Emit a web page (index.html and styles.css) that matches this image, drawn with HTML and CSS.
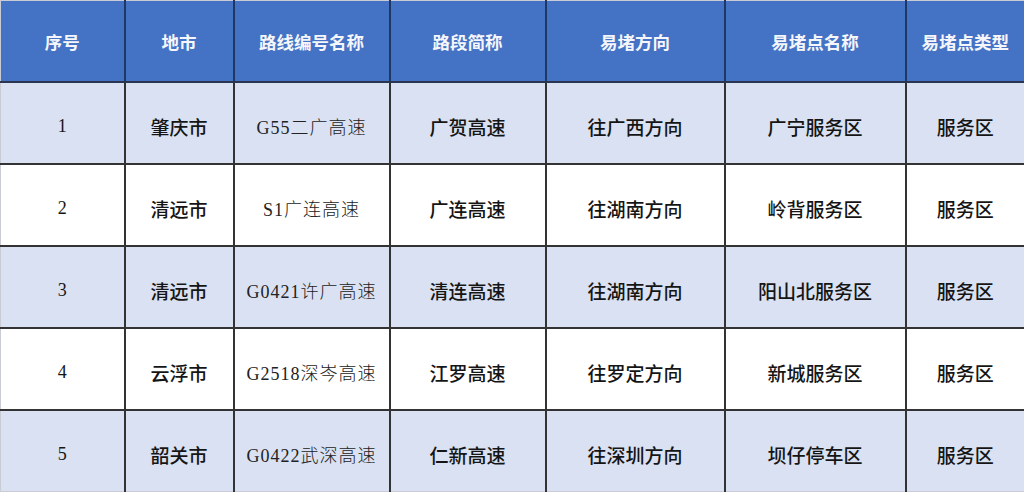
FILE: index.html
```html
<!DOCTYPE html>
<html lang="zh-CN">
<head>
<meta charset="utf-8">
<title>易堵点</title>
<link rel="stylesheet" href="styles.css">
</head>
<body>
<table class="grid">
  <colgroup>
    <col class="c1"><col class="c2"><col class="c3"><col class="c4"><col class="c5"><col class="c6"><col class="c7">
  </colgroup>
  <thead>
    <tr>
      <th>序号</th><th>地市</th><th>路线编号名称</th><th>路段简称</th><th>易堵方向</th><th>易堵点名称</th><th>易堵点类型</th>
    </tr>
  </thead>
  <tbody>
    <tr class="alt">
      <td class="num">1</td><td>肇庆市</td><td class="route">G55二广高速</td><td>广贺高速</td><td>往广西方向</td><td>广宁服务区</td><td>服务区</td>
    </tr>
    <tr>
      <td class="num">2</td><td>清远市</td><td class="route">S1广连高速</td><td>广连高速</td><td>往湖南方向</td><td>岭背服务区</td><td>服务区</td>
    </tr>
    <tr class="alt">
      <td class="num">3</td><td>清远市</td><td class="route">G0421许广高速</td><td>清连高速</td><td>往湖南方向</td><td>阳山北服务区</td><td>服务区</td>
    </tr>
    <tr>
      <td class="num">4</td><td>云浮市</td><td class="route">G2518深岑高速</td><td>江罗高速</td><td>往罗定方向</td><td>新城服务区</td><td>服务区</td>
    </tr>
    <tr class="alt">
      <td class="num">5</td><td>韶关市</td><td class="route">G0422武深高速</td><td>仁新高速</td><td>往深圳方向</td><td>坝仔停车区</td><td>服务区</td>
    </tr>
  </tbody>
</table>
</body>
</html>
```

FILE: styles.css
```css
html, body {
  margin: 0;
  padding: 0;
  background: #ffffff;
}

.grid {
  width: 1024px;
  border-collapse: collapse;
  table-layout: fixed;
  font-family: "Liberation Serif", "Noto Sans CJK SC", serif;
  color: #151515;
  border: 1px solid #c9ccd4;
}

.c1 { width: 124px; }
.c2 { width: 109px; }
.c3 { width: 156px; }
.c4 { width: 156px; }
.c5 { width: 179px; }
.c6 { width: 181px; }
.c7 { width: 119px; }

.grid th {
  height: 80px;
  background: #4472c4;
  color: #f4f6fb;
  font-size: 17.5px;
  font-weight: 700;
  text-align: center;
  vertical-align: middle;
  padding: 0;
  border-left: 2px solid #1f3763;
  border-right: 2px solid #1f3763;
  border-bottom: 2px solid #2a3550;
  border-top: 1px solid #c9ccd4;
}

.grid th:first-child { border-left: 1px solid #c9ccd4; }
.grid th:last-child { border-right: 1px solid #c9ccd4; }

.grid td {
  height: 74px;
  text-align: center;
  vertical-align: middle;
  padding: 6px 0 0 0;
  font-size: 19px;
  font-weight: 500;
  background: #ffffff;
  border: 2px solid #333;
}

.grid td:first-child { border-left: 1px solid #c9ccd4; }
.grid td:last-child { border-right: 1px solid #c9ccd4; }
.grid tbody tr:last-child td { border-bottom: 1px solid #c9ccd4; }

.grid tr.alt td { background: #d9e1f2; }

.grid td.num {
  font-size: 18px;
  font-weight: 400;
}

.grid td.route {
  font-size: 18px;
  font-weight: 300;
  letter-spacing: 1px;
  color: #222;
}
```
